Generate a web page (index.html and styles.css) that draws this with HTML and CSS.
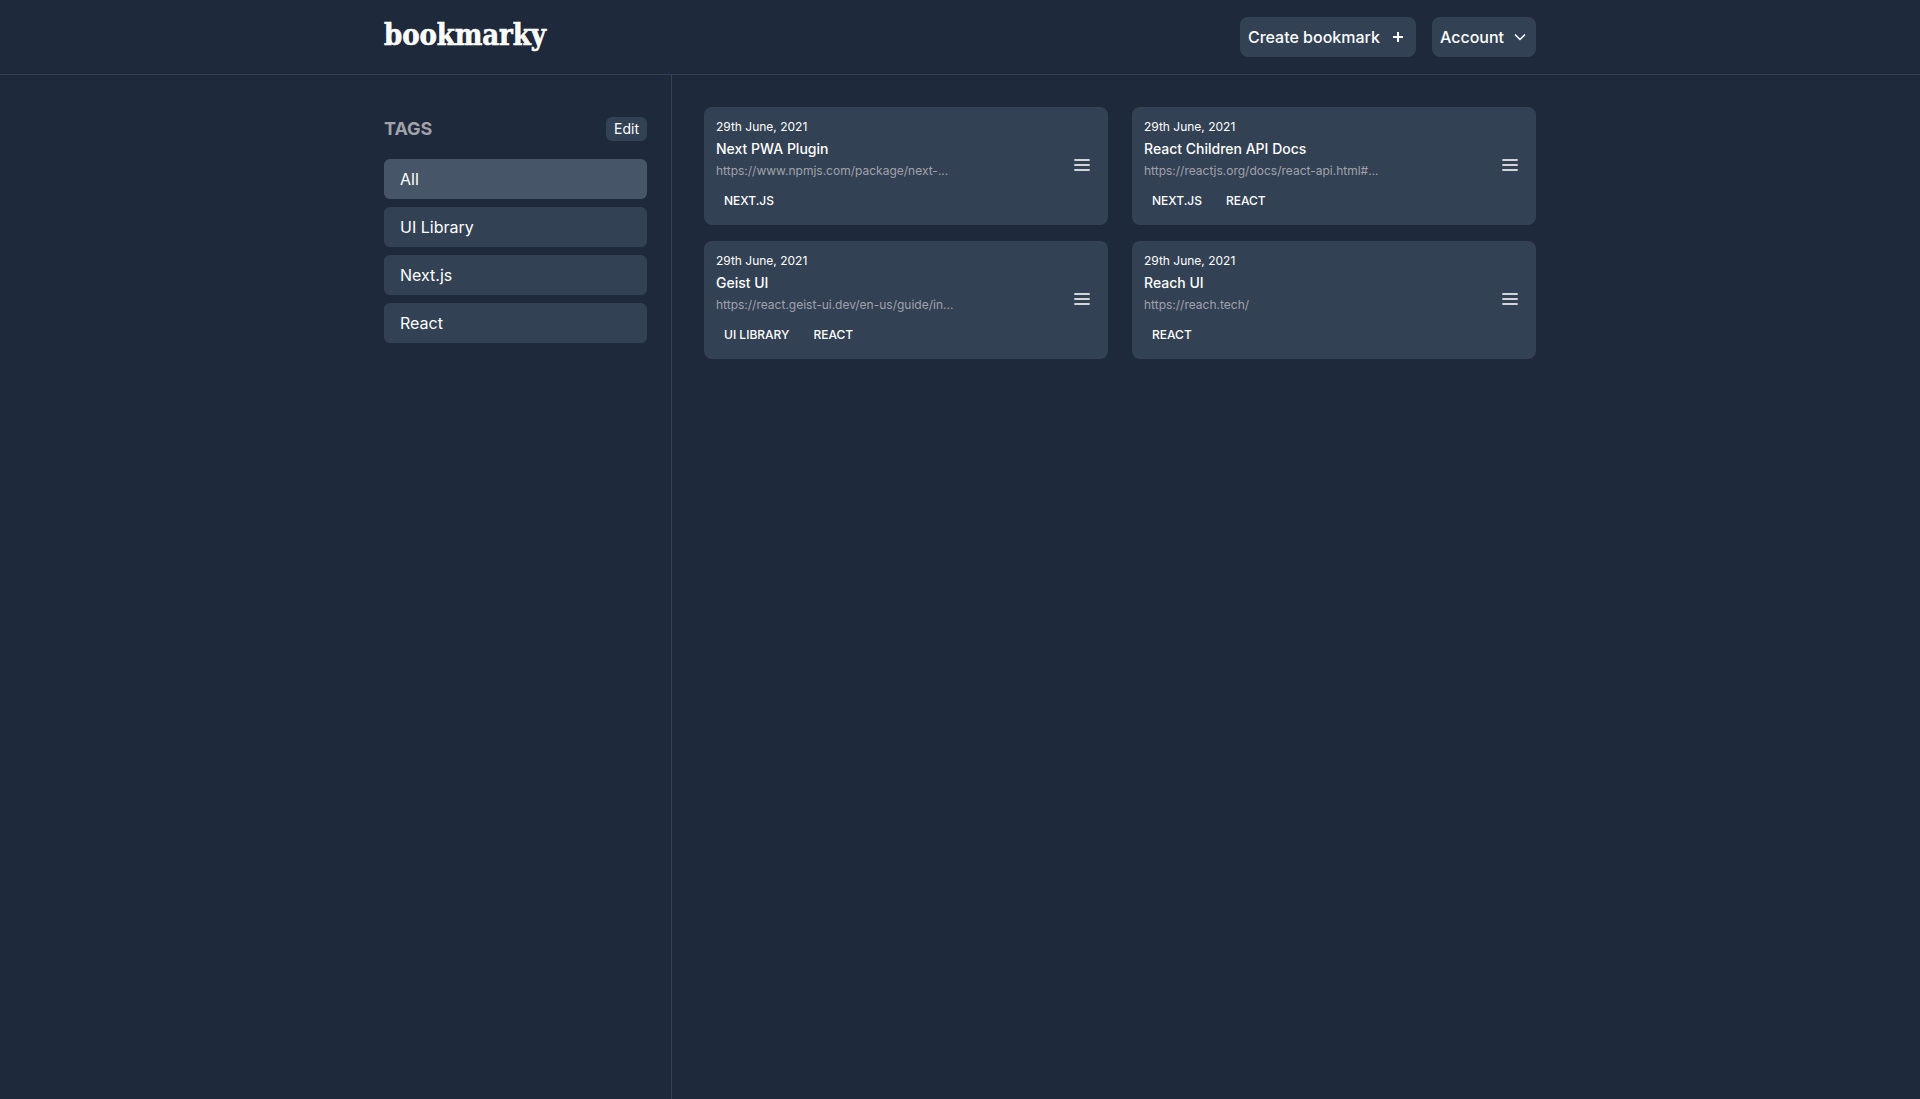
FILE: index.html
```html
<!DOCTYPE html>
<html lang="en">
<head>
<meta charset="utf-8">
<title>bookmarky</title>
<link rel="stylesheet" href="styles.css">
</head>
<body>
<header class="header">
  <div class="container header-row">
    <a class="logo">bookmarky</a>
    <div class="actions">
      <button class="btn">Create bookmark <svg class="plus" viewBox="0 0 20 20" width="20" height="20"><path d="M10 5v10M5 10h10"/></svg></button>
      <button class="btn account">Account <svg class="chevron" viewBox="0 0 16 16" width="16" height="16"><path d="M3 5.5l5 5 5-5"/></svg></button>
    </div>
  </div>
</header>
<div class="container body-row">
  <aside class="sidebar">
    <div class="sidebar-head"><h2 class="heading">TAGS</h2><button class="edit">Edit</button></div>
    <ul class="filters">
      <li class="filter active">All</li>
      <li class="filter">UI Library</li>
      <li class="filter">Next.js</li>
      <li class="filter">React</li>
    </ul>
  </aside>
  <main class="grid">
    <article class="card">
      <div class="info">
        <p class="date">29th June, 2021</p>
        <h3 class="title">Next PWA Plugin</h3>
        <p class="url">https://www.npmjs.com/package/next-...</p>
        <div class="tags"><span class="tag">Next.js</span></div>
      </div>
      <svg class="menu" viewBox="0 0 20 20" width="20" height="20"><path d="M2.3 5h15.4M2.3 10h15.4M2.3 15h15.4"/></svg>
    </article>
    <article class="card">
      <div class="info">
        <p class="date">29th June, 2021</p>
        <h3 class="title">React Children API Docs</h3>
        <p class="url">https://reactjs.org/docs/react-api.html#...</p>
        <div class="tags"><span class="tag">Next.js</span><span class="tag">React</span></div>
      </div>
      <svg class="menu" viewBox="0 0 20 20" width="20" height="20"><path d="M2.3 5h15.4M2.3 10h15.4M2.3 15h15.4"/></svg>
    </article>
    <article class="card">
      <div class="info">
        <p class="date">29th June, 2021</p>
        <h3 class="title">Geist UI</h3>
        <p class="url">https://react.geist-ui.dev/en-us/guide/in...</p>
        <div class="tags"><span class="tag">UI Library</span><span class="tag">React</span></div>
      </div>
      <svg class="menu" viewBox="0 0 20 20" width="20" height="20"><path d="M2.3 5h15.4M2.3 10h15.4M2.3 15h15.4"/></svg>
    </article>
    <article class="card">
      <div class="info">
        <p class="date">29th June, 2021</p>
        <h3 class="title">Reach UI</h3>
        <p class="url">https://reach.tech/</p>
        <div class="tags"><span class="tag">React</span></div>
      </div>
      <svg class="menu" viewBox="0 0 20 20" width="20" height="20"><path d="M2.3 5h15.4M2.3 10h15.4M2.3 15h15.4"/></svg>
    </article>
  </main>
</div>
</body>
</html>
```
FILE: styles.css
```css
* { box-sizing: border-box; margin: 0; padding: 0; }
body {
  min-height: 100vh;
  display: flex;
  flex-direction: column;
  background: #1e293b;
  color: #fff;
  font-family: Inter, "Liberation Sans", sans-serif;
  font-size: 16px;
  line-height: 24px;
}
svg { fill: none; stroke: currentColor; flex: none; }
.container { width: 1152px; margin: 0 auto; }
.header { height: 75px; border-bottom: 1px solid #334155; }
.header-row { display: flex; justify-content: space-between; height: 74px; align-items: center; }
.logo {
  font-family: "DejaVu Serif Condensed", "DejaVu Serif", serif;
  font-stretch: condensed;
  font-weight: 700;
  font-size: 29px;
  line-height: 40px;
  letter-spacing: -0.1px;
  padding-bottom: 5px;
  -webkit-text-stroke: 0.6px #fff;
}
.actions { display: flex; gap: 16px; }
.btn {
  display: flex;
  align-items: center;
  height: 40px;
  padding: 0 8px;
  gap: 8px;
  border: 0;
  border-radius: 8px;
  background: #334155;
  color: #fff;
  font: 500 16px/24px Inter, sans-serif;
}
.plus { stroke-width: 2; }
.chevron { stroke-width: 1.5; }
.body-row { flex: 1; display: flex; }
.sidebar { width: 288px; padding: 42px 24px 0 0; border-right: 1px solid #3f3f46; }
.sidebar-head { display: flex; justify-content: space-between; align-items: center; height: 24px; }
.heading { font-size: 18px; line-height: 24px; font-weight: 700; color: #a1a1aa; }
.edit {
  height: 24px;
  padding: 0 8px;
  border: 0;
  border-radius: 6px;
  background: #334155;
  color: #fff;
  font: 400 14px/24px Inter, sans-serif;
}
.filters { list-style: none; display: grid; gap: 8px; margin-top: 18px; }
.filter { height: 40px; padding: 8px 16px; border-radius: 6px; background: #334155; font-weight: 400; }
.active { background: #475569; }
.grid {
  flex: 1;
  display: grid;
  grid-template-columns: 1fr 1fr;
  gap: 16px 24px;
  align-content: start;
  padding: 32px 0 0 32px;
}
.card {
  display: flex;
  justify-content: space-between;
  height: 118px;
  padding: 12px 16px 12px 12px;
  border-radius: 8px;
  background: #334155;
}
.info { font-size: 12px; line-height: 16px; }
.date { font-weight: 400; }
.title { margin: 4px 0; font-size: 14px; line-height: 20px; font-weight: 500; }
.url { color: #a1a1aa; }
.tags { display: flex; gap: 8px; margin-top: 10px; }
.tag { padding: 4px 8px; font-weight: 500; text-transform: uppercase; }
.menu { margin-top: 36px; stroke-width: 2; color: #d4d4d8; }
```
